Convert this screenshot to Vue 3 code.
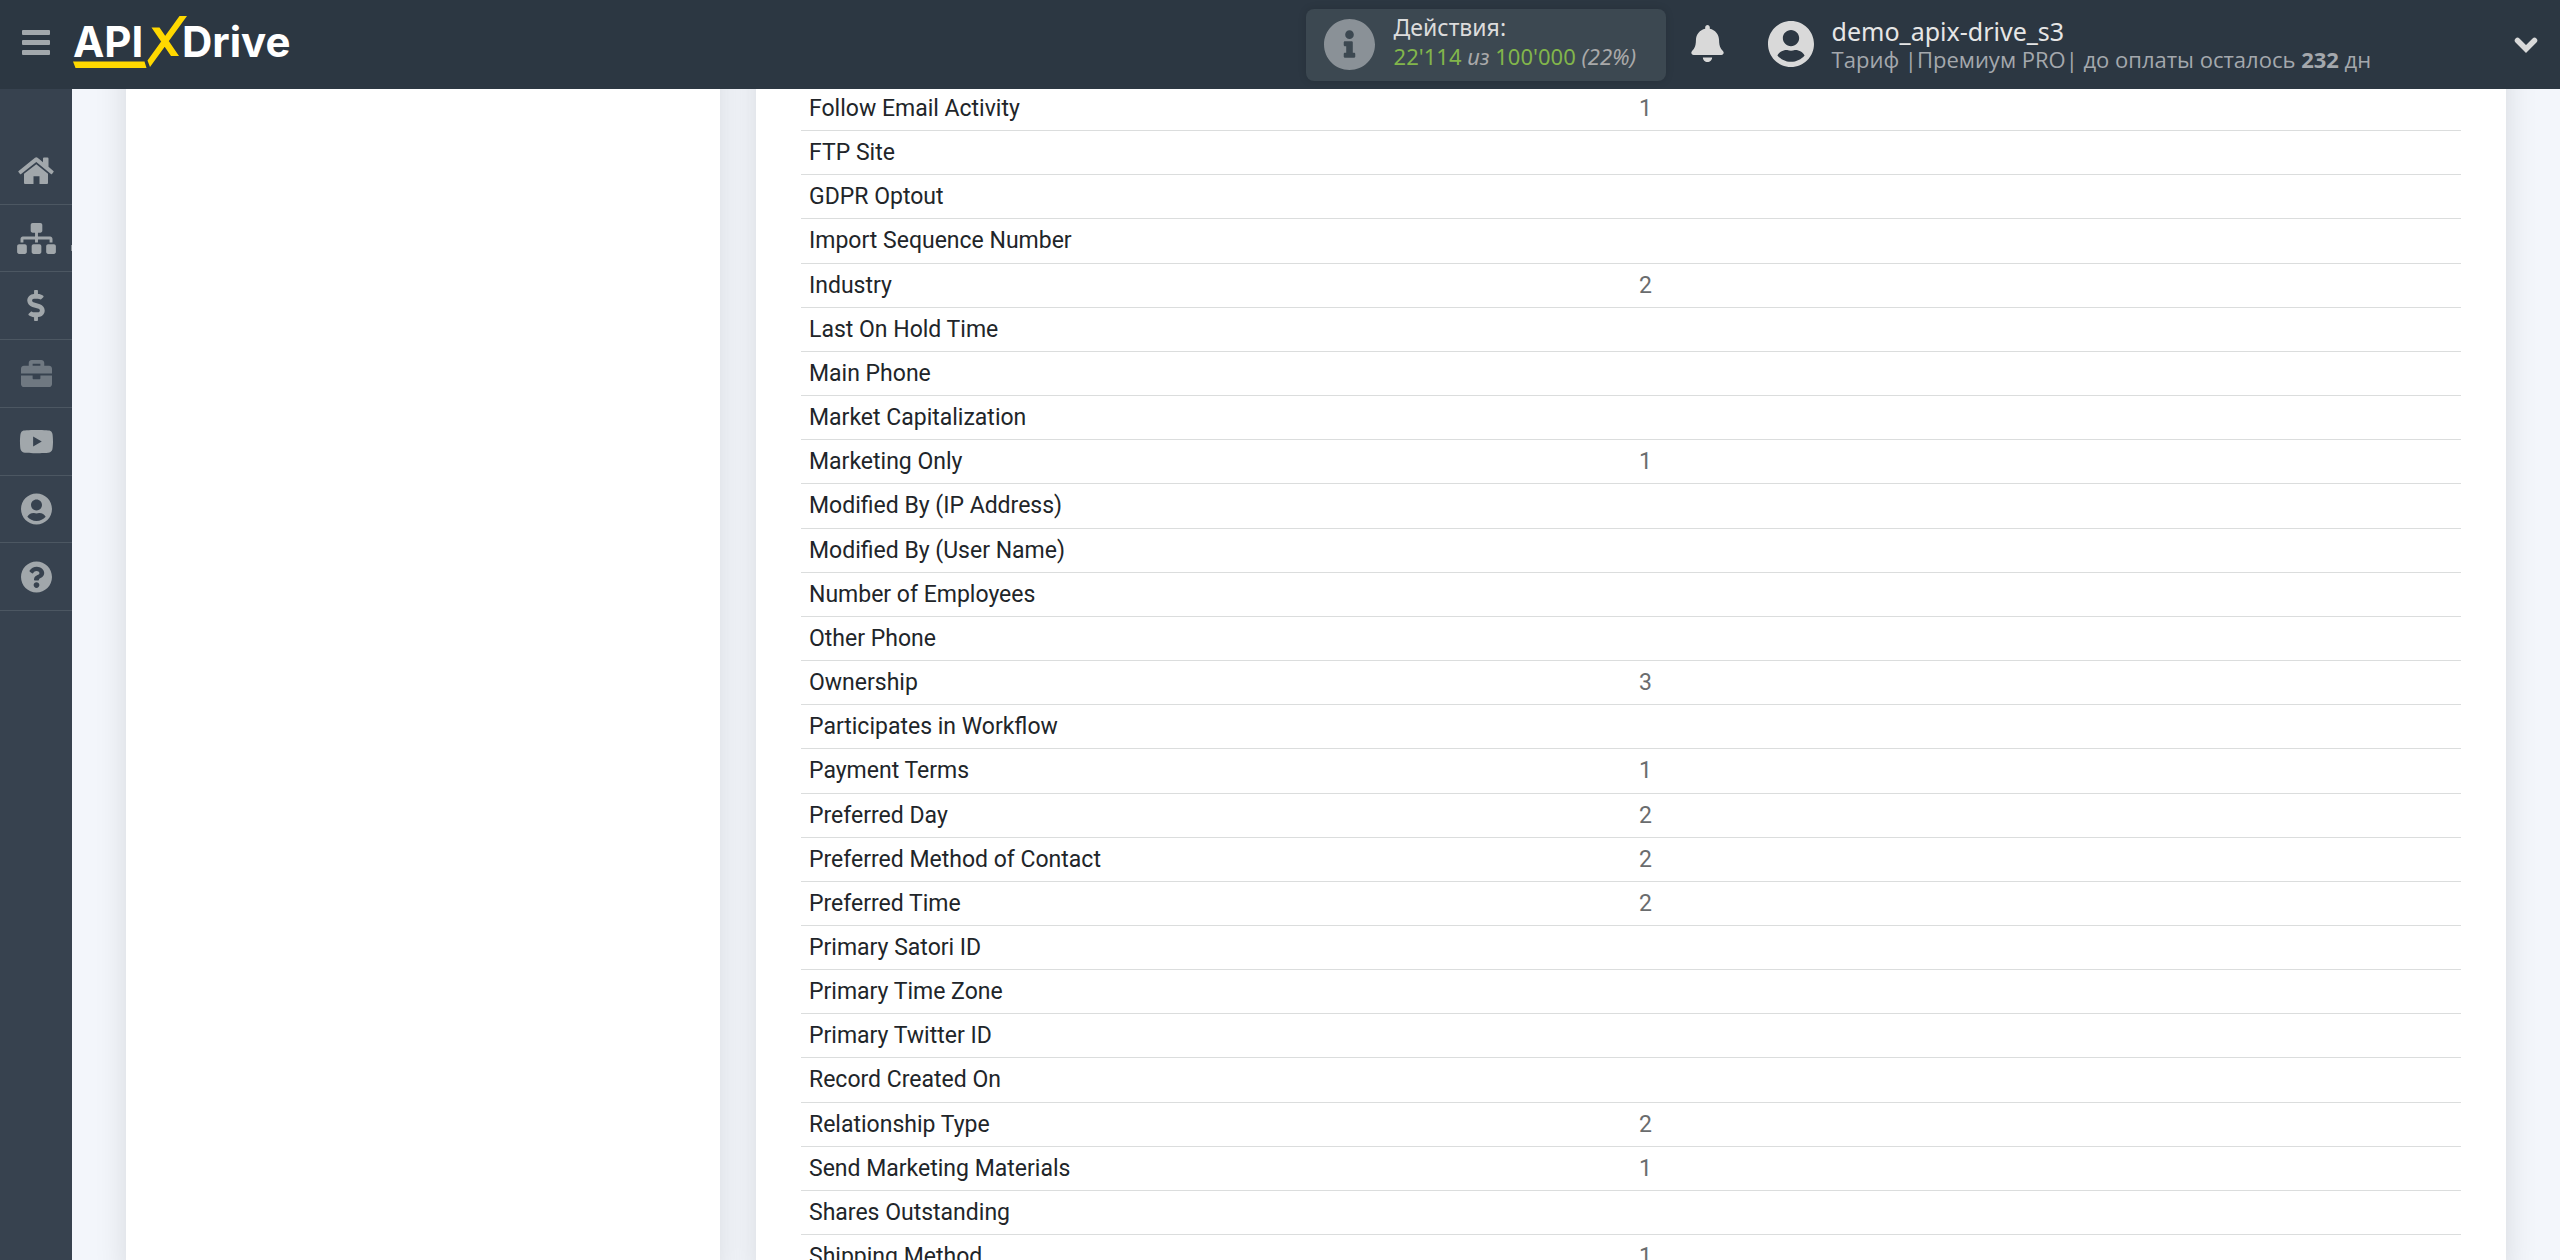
<script setup>
const circleUser = 'M248 8C111 8 0 119 0 256s111 248 248 248 248-111 248-248S385 8 248 8zm0 96c48.6 0 88 39.4 88 88s-39.4 88-88 88-88-39.4-88-88 39.4-88 88-88zm0 344c-58.7 0-111.3-26.6-146.5-68.2 18.8-35.4 55.6-59.8 98.5-59.8 2.4 0 4.8.4 7.1 1.1 13 4.2 26.6 6.9 40.9 6.9 14.3 0 28-2.7 40.9-6.9 2.3-.7 4.7-1.1 7.1-1.1 42.9 0 79.7 24.4 98.5 59.8C359.3 421.4 306.7 448 248 448z'

const nav = [
  { id: 'home', label: 'Главная', box: '0 0 36 27', w: 36, h: 27, d: 'M17 .8a2 2 0 0 1 2.600 0L25 5.300V1.500Q25 .5 26 .5h3.500q1 0 1 1V9.800L35.400 14q.6.5.1 1.100l-1.500 1.800q-.5.600-1.100.1L18.300 5.100 3.100 17q-.6.5-1.100-.1L.5 15.100Q0 14.500.6 14zM18.300 7.200 30 16.700V26q0 1-1 1h-7.500v-7.800h-6V27H7q-1 0-1-1v-9.300z' },
  { id: 'links', label: 'Связи', box: '0 0 640 512', w: 39, h: 31, more: true, d: 'M128 352H32c-17.670 0-32 14.330-32 32v96c0 17.670 14.330 32 32 32h96c17.670 0 32-14.330 32-32v-96c0-17.670-14.330-32-32-32zm-24-80h192v48h48v-48h192v48h48v-57.590c0-21.170-17.230-38.410-38.410-38.410H344v-64h40c17.670 0 32-14.330 32-32V32c0-17.670-14.330-32-32-32H256c-17.670 0-32 14.330-32 32v96c0 17.670 14.330 32 32 32h40v64H94.410C73.230 224 56 241.230 56 262.410V320h48v-48zm264 80h-96c-17.670 0-32 14.330-32 32v96c0 17.670 14.330 32 32 32h96c17.670 0 32-14.330 32-32v-96c0-17.670-14.330-32-32-32zm240 0h-96c-17.670 0-32 14.330-32 32v96c0 17.670 14.330 32 32 32h96c17.670 0 32-14.330 32-32v-96c0-17.670-14.330-32-32-32z' },
  { id: 'billing', label: 'Оплата', box: '0 0 288 512', w: 18, h: 31, d: 'M209.2 233.4l-108-31.6C88.7 198.2 80 186.5 80 173.5c0-16.3 13.2-29.5 29.5-29.5h66.3c12.2 0 24.2 3.7 34.2 10.5 6.1 4.1 14.3 3.1 19.5-2l34.8-34c7.1-6.9 6.1-18.4-1.8-24.5C238 74.8 207.4 64.1 176 64V16c0-8.8-7.2-16-16-16h-32c-8.8 0-16 7.2-16 16v48h-2.5C45.8 64-5.4 118.7.5 183.6c4.2 46.1 39.4 83.6 83.8 96.6l102.5 30c12.5 3.7 21.2 15.3 21.2 28.3 0 16.3-13.2 29.5-29.5 29.5h-66.3C100 368 88 364.3 78 357.5c-6.1-4.1-14.3-3.1-19.5 2l-34.8 34c-7.1 6.9-6.1 18.4 1.8 24.5 24.5 19.2 55.1 29.9 86.5 30v48c0 8.8 7.2 16 16 16h32c8.800 0 16-7.2 16-16v-48.2c46.6-.9 90.3-28.6 105.7-72.7 21.5-61.6-14.6-124.8-72.5-141.7z' },
  { id: 'work', label: 'Проекты', box: '0 0 512 512', w: 31, h: 31, dim: true, d: 'M320 336c0 8.84-7.16 16-16 16h-96c-8.840 0-16-7.160-16-16v-48H0v144c0 25.600 22.400 48 48 48h416c25.600 0 48-22.400 48-48V288H320v48zm144-208h-80V80c0-25.600-22.400-48-48-48H176c-25.600 0-48 22.400-48 48v48H48c-25.600 0-48 22.400-48 48v80h512v-80c0-25.600-22.400-48-48-48zm-144 0H192V96h128v32z' },
  { id: 'video', label: 'Видео', box: '0 0 576 512', w: 35, h: 31, d: 'M549.655 124.083c-6.281-23.650-24.787-42.276-48.284-48.597C458.781 64 288 64 288 64S117.220 64 74.629 75.486c-23.497 6.322-42.003 24.947-48.284 48.597-11.412 42.867-11.412 132.305-11.412 132.305s0 89.438 11.412 132.305c6.281 23.650 24.787 41.500 48.284 47.821C117.220 448 288 448 288 448s170.780 0 213.371-11.486c23.497-6.321 42.003-24.171 48.284-47.821 11.412-42.867 11.412-132.305 11.412-132.305s0-89.438-11.412-132.305zm-317.510 213.508V175.185l142.739 81.205-142.739 81.201z' },
  { id: 'profile', label: 'Профиль', box: '0 0 496 512', w: 31, h: 32, d: circleUser },
  { id: 'help', label: 'Помощь', box: '8 0 496 512', w: 31, h: 32, d: 'M504 256c0 136.997-111.043 248-248 248S8 392.997 8 256C8 119.083 119.043 8 256 8s248 111.083 248 248zM262.655 90c-54.497 0-89.255 22.957-116.549 63.758-3.536 5.286-2.353 12.415 2.715 16.258l34.699 26.310c5.205 3.947 12.621 3.008 16.665-2.122 17.864-22.658 30.113-35.797 57.303-35.797 20.429 0 45.698 13.148 45.698 32.958 0 14.976-12.363 22.667-32.534 33.976C247.128 238.528 216 254.941 216 296v4c0 6.627 5.373 12 12 12h56c6.627 0 12-5.373 12-12v-1.333c0-28.462 83.186-29.647 83.186-106.667 0-58.002-60.165-102-116.531-102zM256 338c-25.365 0-46 20.635-46 46 0 25.364 20.635 46 46 46s46-20.636 46-46c0-25.365-20.635-46-46-46z' },
]

const rows = [
  ['Follow Email Activity', '1'],
  ['FTP Site', ''],
  ['GDPR Optout', ''],
  ['Import Sequence Number', ''],
  ['Industry', '2'],
  ['Last On Hold Time', ''],
  ['Main Phone', ''],
  ['Market Capitalization', ''],
  ['Marketing Only', '1'],
  ['Modified By (IP Address)', ''],
  ['Modified By (User Name)', ''],
  ['Number of Employees', ''],
  ['Other Phone', ''],
  ['Ownership', '3'],
  ['Participates in Workflow', ''],
  ['Payment Terms', '1'],
  ['Preferred Day', '2'],
  ['Preferred Method of Contact', '2'],
  ['Preferred Time', '2'],
  ['Primary Satori ID', ''],
  ['Primary Time Zone', ''],
  ['Primary Twitter ID', ''],
  ['Record Created On', ''],
  ['Relationship Type', '2'],
  ['Send Marketing Materials', '1'],
  ['Shares Outstanding', ''],
  ['Shipping Method', '1'],
]
</script>

<template>
  <div class="page">
    <header class="topbar">
      <div class="brand">
        <button class="menu" type="button" aria-label="Меню"><i></i><i></i><i></i></button>
        <a class="logo" href="#" aria-label="APIXDrive">
          <svg width="224" height="56" viewBox="0 0 224 56">
            <text class="word" x="0" y="43">API</text>
            <path fill="#ffd800" d="M0 47.500h71.500l2 6.500H2.500zM106.500 2h7.500L77 53l-2.500-6.500zM78.500 13.500h8L106 42h-8z" />
            <text class="word" x="109" y="43">Drive</text>
          </svg>
        </a>
      </div>
      <div class="usage">
        <svg class="usage-icon" width="51" height="51" viewBox="8 8 496 496"><path d="M256 8C119.043 8 8 119.083 8 256c0 136.997 111.043 248 248 248s248-111.003 248-248C504 119.083 392.957 8 256 8zm0 110c23.196 0 42 18.804 42 42s-18.804 42-42 42-42-18.804-42-42 18.804-42 42-42zm56 254c0 6.627-5.373 12-12 12h-88c-6.627 0-12-5.373-12-12v-24c0-6.627 5.373-12 12-12h12v-64h-12c-6.627 0-12-5.373-12-12v-24c0-6.627 5.373-12 12-12h64c6.627 0 12 5.373 12 12v100h12c6.627 0 12 5.373 12 12v24z" /></svg>
        <div class="usage-text">
          <div class="usage-title">Действия:</div>
          <div class="usage-count"><b>22'114</b> <em>из</em> <b>100'000</b> <em>(22%)</em></div>
        </div>
      </div>
      <button class="bell" type="button" aria-label="Уведомления">
        <svg width="33" height="37" viewBox="0 0 448 512"><path d="M224 512c35.320 0 63.970-28.650 63.970-64H160.030c0 35.350 28.650 64 63.970 64zm215.390-149.710c-19.320-20.760-55.470-51.990-55.470-154.290 0-77.700-54.480-139.900-127.940-155.160V32c0-17.670-14.320-32-31.980-32s-31.980 14.330-31.980 32v20.840C118.560 68.100 64.080 130.300 64.080 208c0 102.300-36.150 133.530-55.470 154.290-6 6.450-8.660 14.160-8.610 21.710.11 16.400 12.980 32 32.100 32h383.800c19.120 0 32-15.600 32.100-32 .05-7.550-2.610-15.270-8.610-21.710z" /></svg>
      </button>
      <div class="account">
        <svg width="46" height="46" viewBox="0 8 496 496"><path :d="circleUser" /></svg>
        <div class="account-text">
          <div class="account-name">demo_apix-drive_s3</div>
          <div class="account-plan">Тариф |Премиум PRO| до оплаты осталось <strong>232</strong> дн</div>
        </div>
      </div>
      <button class="expand" type="button" aria-label="Развернуть">
        <svg width="24" height="16" viewBox="0 0 24 16"><path d="M3.500 3.500 12 12l8.500-8.500" fill="none" stroke="#d9d9d9" stroke-width="5.500" stroke-linecap="round" /></svg>
      </button>
    </header>

    <div class="body">
      <nav class="sidebar">
        <ul>
          <li v-for="item in nav" :key="item.id" :class="{ dim: item.dim, more: item.more }">
            <a href="#" :aria-label="item.label">
              <svg :width="item.w" :height="item.h" :viewBox="item.box"><path :d="item.d" /></svg>
            </a>
          </li>
        </ul>
      </nav>
      <main class="content">
        <section class="panel side"></section>
        <section class="panel data">
          <table>
            <tbody>
              <tr v-for="[name, value] in rows" :key="name">
                <th scope="row">{{ name }}</th>
                <td>{{ value }}</td>
              </tr>
            </tbody>
          </table>
        </section>
      </main>
    </div>
  </div>
</template>

<style>
html,
body {
  overflow: hidden;
}
</style>

<style scoped>
.page {
  height: 100vh;
  overflow: hidden;
  background: #f3f6fb;
  font-family: "Noto Sans", "Open Sans", sans-serif;
}
button {
  padding: 0;
  border: 0;
  background: none;
}
svg {
  display: block;
}
.topbar {
  position: fixed;
  z-index: 2;
  top: 0;
  left: 0;
  right: 0;
  display: flex;
  align-items: center;
  box-sizing: border-box;
  height: 89px;
  padding-right: 22px;
  background: #2c3742;
  color: #dcdcdc;
}
.brand {
  display: flex;
  align-items: center;
  gap: 23px;
  box-sizing: border-box;
  width: 51vw;
  padding: 0 0 5px 22px;
}
.menu {
  display: grid;
  gap: 5px;
  width: 28px;
}
.menu i {
  height: 5px;
  border-radius: 1px;
  background: #a2a8ac;
}
.word {
  fill: #fff;
  font: 700 42px Inter, "Open Sans", sans-serif;
}
.usage {
  display: flex;
  align-items: center;
  gap: 19px;
  box-sizing: border-box;
  width: 360px;
  height: 72px;
  padding-left: 18px;
  border-radius: 8px;
  background: #3c4851;
  box-shadow: 0 0 8px rgba(0, 0, 0, 0.12);
}
.usage-icon {
  fill: #8a9197;
}
.usage-text {
  padding-bottom: 6px;
  line-height: 29px;
  white-space: nowrap;
}
.usage-title {
  font-size: 23px;
}
.usage-count {
  font-size: 22px;
}
.usage-count b {
  color: #82b64b;
  font-weight: 400;
}
.usage-count em {
  color: #a9a9a9;
}
.bell {
  margin-left: 25px;
  padding-bottom: 2px;
}
.bell svg,
.account svg {
  fill: #d9d9d9;
}
.account {
  display: flex;
  align-items: center;
  gap: 18px;
  margin-left: 44px;
  padding-bottom: 2px;
  white-space: nowrap;
}
.account-text {
  padding-top: 2px;
  line-height: 28px;
}
.account-name {
  color: #e6e6e6;
  font-size: 25px;
}
.account-plan {
  color: #a4a8ad;
  font-family: "Open Sans", "Noto Sans", sans-serif;
  font-size: 22px;
}
.expand {
  margin-left: auto;
}
.body {
  display: flex;
  min-height: 100vh;
}
.sidebar {
  flex: 0 0 72px;
  padding-top: 137px;
  background: #37424f;
}
.sidebar ul {
  display: grid;
  grid-template-rows: repeat(7, 1fr);
  height: 474px;
  margin: 0;
  padding: 0;
  list-style: none;
}
.sidebar li {
  border-bottom: 1px solid #4c5762;
}
.sidebar a {
  display: flex;
  align-items: center;
  justify-content: center;
  box-sizing: border-box;
  height: 100%;
}
.sidebar svg {
  fill: #a1a7ab;
}
.sidebar .dim svg {
  fill: #6f7881;
}
.sidebar .more a {
  position: relative;
}
.sidebar .more a::after {
  position: absolute;
  right: 0;
  top: 40px;
  width: 1px;
  height: 6px;
  background: #8b9298;
  content: "";
}
.content {
  display: flex;
  flex: 1;
  gap: 36px;
  padding: 0 54px;
}
.panel {
  background: #fff;
  box-shadow: 0 0 30px rgba(0, 0, 0, 0.12);
}
.side {
  flex: 0 0 594px;
}
.data {
  flex: 1;
  padding: 87px 45px 0;
}
table {
  width: 100%;
  border-spacing: 0;
  table-layout: fixed;
  font-family: Roboto, sans-serif;
  font-size: 23px;
  line-height: 1.442;
}
th,
td {
  height: 1lh;
  padding: 5px 8px;
  border-bottom: 1px solid #dbdddd;
  font-weight: 400;
  text-align: left;
}
th {
  color: #212529;
}
td {
  color: #6a6c6e;
}
</style>
